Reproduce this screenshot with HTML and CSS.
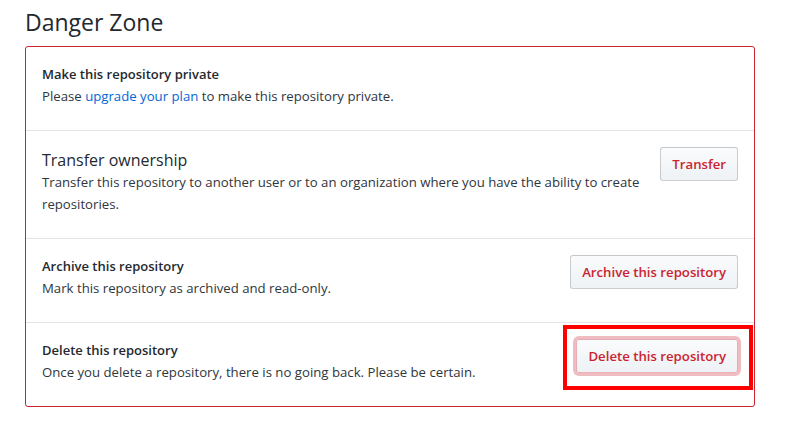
FILE: index.html
```html
<!DOCTYPE html>
<html lang="en">
<head>
<meta charset="utf-8">
<title>Danger Zone</title>
<link rel="stylesheet" href="styles.css">
</head>
<body>
<div class="page">
  <h2 class="heading">Danger Zone</h2>
  <div class="box">
    <div class="row">
      <div class="info">
        <div class="title">Make this repository private</div>
        <p class="desc">Please <a href="#" class="link">upgrade your plan</a> to make this repository private.</p>
      </div>
    </div>
    <div class="row">
      <div class="info">
        <div class="title title-lg">Transfer ownership</div>
        <p class="desc">Transfer this repository to another user or to an organization where you have the ability to create repositories.</p>
      </div>
      <button class="btn">Transfer</button>
    </div>
    <div class="row">
      <div class="info">
        <div class="title">Archive this repository</div>
        <p class="desc">Mark this repository as archived and read-only.</p>
      </div>
      <button class="btn">Archive this repository</button>
    </div>
    <div class="row">
      <div class="info">
        <div class="title">Delete this repository</div>
        <p class="desc">Once you delete a repository, there is no going back. Please be certain.</p>
      </div>
      <div class="btn-wrap">
        <button class="btn btn-focus">Delete this repository</button>
        <span class="highlight"></span>
      </div>
    </div>
  </div>
</div>
</body>
</html>
```

FILE: styles.css
```css
* { box-sizing: border-box; }
html, body { margin: 0; padding: 0; background: #fff; }
body {
  font-family: "Open Sans", "Noto Sans", sans-serif;
  color: #24292e;
  font-size: 13px;
}
.page {
  padding: 6px 45px 0 25px;
}
.heading {
  margin: 0 0 8px 0;
  font-size: 23px;
  font-weight: 400;
  line-height: 32px;
  color: #24292e;
}
.box {
  border: 1px solid #cb2431;
  border-radius: 3px;
}
.row {
  display: flex;
  align-items: flex-start;
  justify-content: space-between;
  gap: 10px;
  padding: 16px 16px 23px 16px;
  border-top: 1px solid #e1e4e8;
}
.row:first-child { border-top: 0; }
.info { flex: 1 1 auto; min-width: 0; }
.title {
  font-size: 13px;
  font-weight: 600;
  line-height: 22px;
}
.title-lg {
  font-size: 16px;
  font-weight: 400;
  line-height: 24px;
  margin-top: 1px;
  margin-bottom: -1px;
}
.desc {
  margin: 0;
  font-size: 13.2px;
  line-height: 22px;
  color: #2f363d;
}
.link { color: #0366d6; text-decoration: none; }
.btn {
  flex: 0 0 auto;
  font-family: inherit;
  font-size: 13.2px;
  font-weight: 600;
  line-height: 20px;
  color: #cb2431;
  padding: 6px 11px;
  background: linear-gradient(#fafbfc, #eff3f6 90%);
  border: 1px solid rgba(27, 31, 35, 0.2);
  border-radius: 3px;
  height: 34px;
}
.btn-wrap {
  position: relative;
  flex: 0 0 auto;
}
.btn-focus {
  box-shadow: 0 0 0 3px rgba(203, 36, 49, 0.3);
  border-color: rgba(203, 36, 49, 0.35);
}
.highlight {
  position: absolute;
  left: -13px;
  right: -15px;
  top: -14px;
  bottom: -17px;
  border: 4px solid #ff0000;
  pointer-events: none;
}
```
